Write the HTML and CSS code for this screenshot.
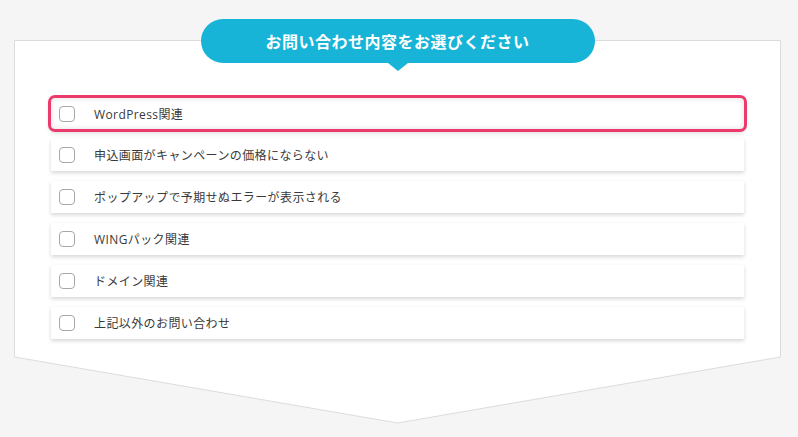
FILE: index.html
```html
<!DOCTYPE html>
<html lang="ja">
<head>
  <meta charset="UTF-8">
  <title>お問い合わせ</title>
  <link rel="stylesheet" href="styles.css">
</head>
<body>

  <section class="panel">
    <svg class="panel-bg" width="767" height="384" viewBox="0 0 767 384">
      <polygon points="0.5,0.5 766.5,0.5 766.5,317 383.5,383 0.5,317" fill="#fff" stroke="#dcdcdc" stroke-width="1"/>
    </svg>

    <h2 class="panel-title">お問い合わせ内容をお選びください</h2>

    <ul class="choices">
      <li class="choice selected"><span class="box"></span>WordPress関連</li>
      <li class="choice"><span class="box"></span>申込画面がキャンペーンの価格にならない</li>
      <li class="choice"><span class="box"></span>ポップアップで予期せぬエラーが表示される</li>
      <li class="choice"><span class="box"></span>WINGパック関連</li>
      <li class="choice"><span class="box"></span>ドメイン関連</li>
      <li class="choice"><span class="box"></span>上記以外のお問い合わせ</li>
    </ul>
  </section>

</body>
</html>
```

FILE: styles.css
```css
body {
margin: 0;
padding: 40px 0 0 14px;
background-color: #f5f5f5;
font-family: "Open Sans", "Noto Sans CJK JP", sans-serif;
color: #333;
}

.panel {
position: relative;
box-sizing: border-box;
width: 767px;
height: 384px;
padding: 0 37px;
display: flex;
flex-direction: column;
align-items: center;
}

/* pentagon shape drawn behind the content */
.panel-bg {
position: absolute;
top: 0;
left: 0;
z-index: 0;
}

.panel-title {
position: relative;
z-index: 1;
box-sizing: border-box;
width: 394px;
height: 44px;
margin: -21px 0 0;
border-radius: 22px;
background-color: #17b4d7;
color: #fff;
font-family: "Noto Sans CJK JP", sans-serif;
font-size: 16px;
font-weight: bold;
line-height: 44px;
text-align: center;
letter-spacing: 0.5px;
}

.panel-title::after {
content: "";
position: absolute;
left: 50%;
bottom: -8px;
margin-left: -10px;
border-left: 10px solid transparent;
border-right: 10px solid transparent;
border-top: 8px solid #17b4d7;
}

.choices {
position: relative;
z-index: 1;
list-style: none;
margin: 34px 0 0;
padding: 0;
width: 100%;
display: flex;
flex-direction: column;
gap: 10px;
}

.choice {
display: flex;
align-items: center;
height: 32px;
padding-left: 8px;
background-color: #fff;
box-shadow: 0 2px 4px rgba(0, 0, 0, 0.16);
font-size: 12px;
letter-spacing: 0.4px;
color: #3a3a3a;
}

.choice.selected {
height: 31px;
margin-top: 1px;
border-radius: 4px;
box-shadow: 0 0 0 3px #ec3a6d, inset 0 0 6px rgba(0, 0, 0, 0.12), 0 3px 6px rgba(0, 0, 0, 0.2);
}

.box {
box-sizing: border-box;
width: 16px;
height: 16px;
margin-right: 19px;
border: 1px solid #a8a8a8;
border-radius: 4px;
background-color: #fff;
}
```
